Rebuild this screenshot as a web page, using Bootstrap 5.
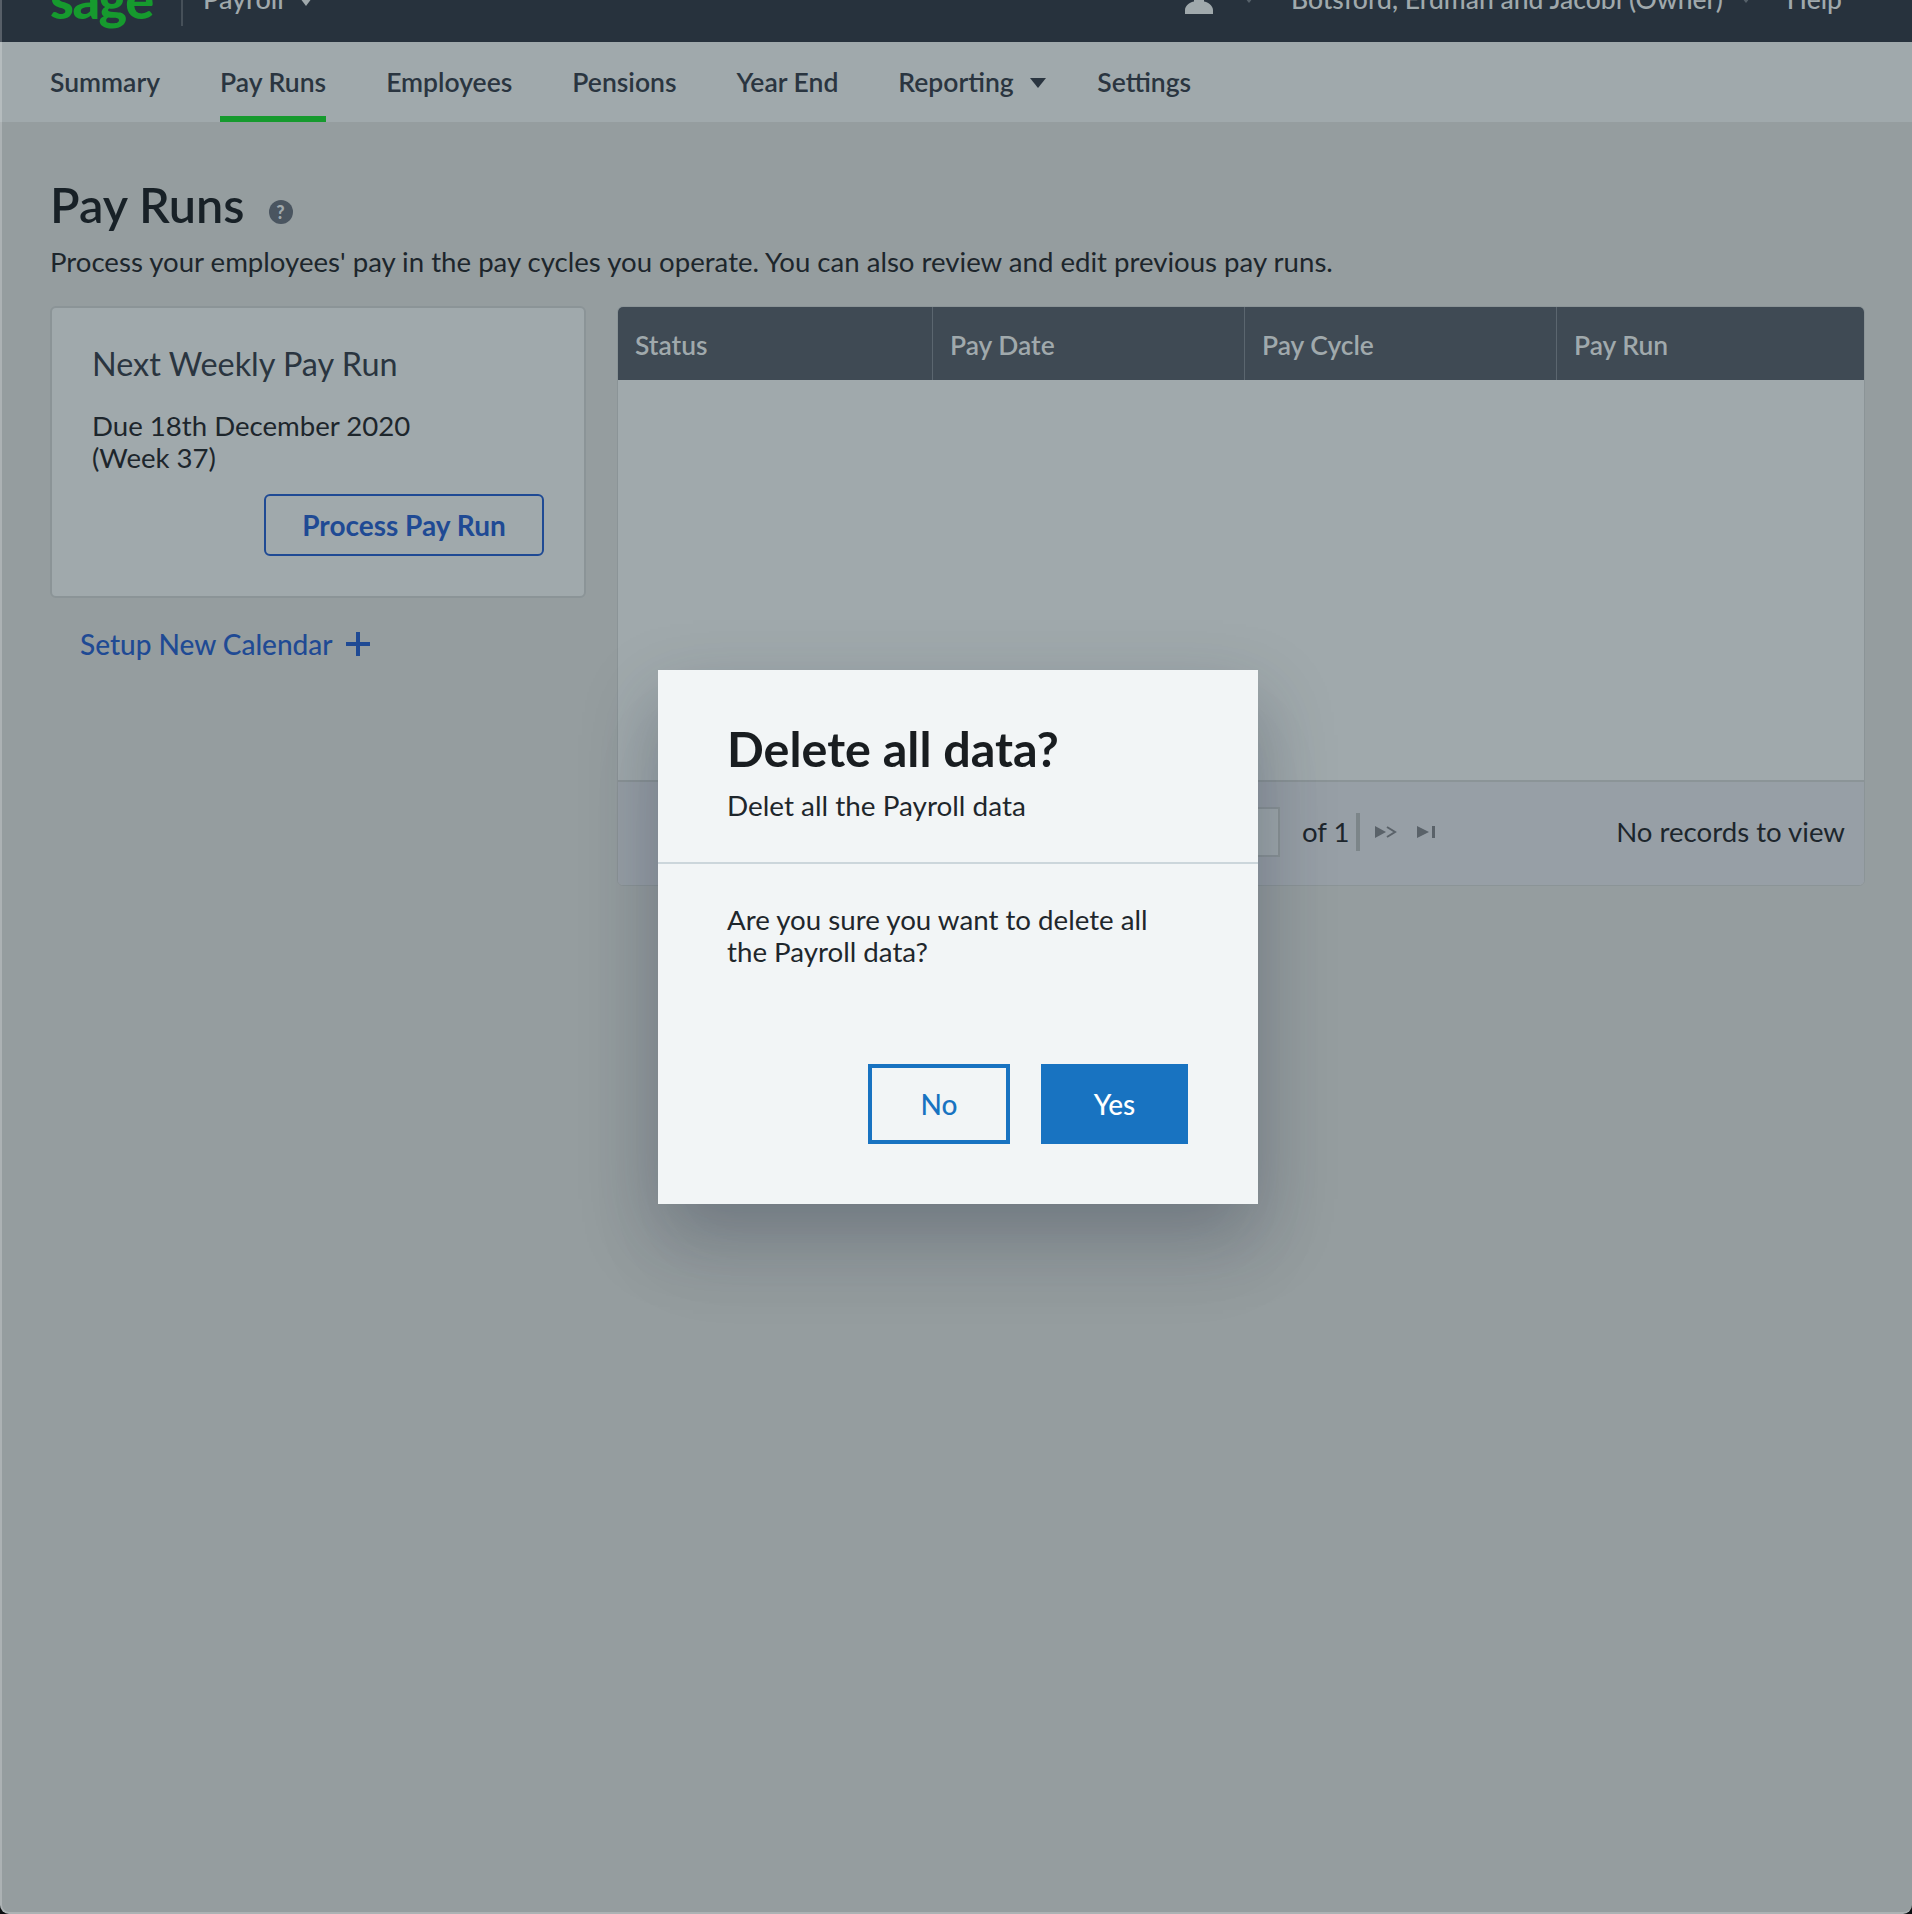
<!DOCTYPE html>
<html lang="en">
<head>
    <meta charset="UTF-8">
    <meta name="viewport" content="width=device-width, initial-scale=1.0">
    <title>Pay Runs</title>
    <link href="https://cdn.jsdelivr.net/npm/bootstrap@5.3.0/dist/css/bootstrap.min.css" rel="stylesheet">
    <style>
        html { background: #0c0f12; }
        body {
            font-family: Lato, "Liberation Sans", sans-serif;
            background: #959d9f;
            color: #1d262c;
            height: 1914px;
            font-size: 27.6px;
            line-height: 32px;
            position: relative;
            overflow: hidden;
            border-radius: 0 0 9px 9px;
        }
        /* light rim of the window, left and bottom */
        body::after {
            content: "";
            position: absolute;
            inset: 0;
            border-left: 2px solid rgba(255, 255, 255, .22);
            border-bottom: 2px solid rgba(255, 255, 255, .22);
            border-radius: 0 0 9px 9px;
            pointer-events: none;
        }
        .top-bar {
            height: 42px;
            background: #27323d;
            overflow: hidden;
            color: #a0a9ac;
            padding: 0 70px 0 50px;
        }
        .top-inner { height: 42px; margin-top: -21px; font-size: 26.5px; position: relative; }
        .top-text { margin-top: -3px; font-weight: 500; }
        .brand-word { color: #169a2e; font-weight: 900; font-size: 54px; line-height: 42px; width: 131px; margin-top: -2px; letter-spacing: -1.5px; }
        .top-sep { width: 2px; height: 47px; background: #465059; margin-right: 20px; align-self: flex-start; }
        .product-name { font-size: 27px; }
        .arrow-down { width: 0; height: 0; border-left: 6px solid transparent; border-right: 6px solid transparent; border-top: 8px solid #a0a9ac; }
        .arrow-faint { border-left-width: 4px; border-right-width: 4px; border-top: 5px solid #56616a; }
        .arrow-pay { margin-left: 16px; margin-top: 4px; }
        .avatar-mark { margin-left: auto; margin-right: 32px; }
        .arrow-user { margin-right: 38px; }
        .arrow-org { margin: 0 37px 0 19px; }
        .sub-nav { height: 80px; background: #a0a9ac; padding-left: 50px; gap: 60px; }
        .sub-nav a { color: #2a3540; font-size: 26.5px; font-weight: 600; text-decoration: none; height: 80px; line-height: 80px; display: block; }
        .sub-nav a.current { border-bottom: 6px solid #169a2e; }
        .sub-nav a.has-menu { margin-right: -9px; }
        .sub-nav .arrow-down { border-top-color: #2a3540; border-left-width: 8px; border-right-width: 8px; border-top-width: 10px; margin-left: 10px; display: inline-block; vertical-align: 4px; }
        .page-head { padding: 54px 50px 0; }
        .page-head h1 { font-size: 48.6px; line-height: 56px; font-weight: 600; margin: 0; color: #182127; }
        .help-dot { width: 24px; height: 24px; border-radius: 50%; background: #4a5560; color: #a0a9ac; font-size: 18px; line-height: 24px; font-weight: 900; text-align: center; margin: 16px 0 0 24px; }
        .page-head p { margin: 14px 0 0; }
        .content-row { padding: 28px 47px 0 50px; gap: 31px; align-items: flex-start; }
        .left-col { width: 536px; flex-shrink: 0; }
        .next-card { height: 292px; background: #a0a9ac; border: 2px solid #8b9497; border-radius: 6px; padding: 37px 40px 0; }
        .next-card h2 { font-size: 32.4px; line-height: 38px; font-weight: 400; color: #2a3540; margin: 0 0 27px; }
        .next-card p { margin: 0 0 20px; }
        .btn-process { display: block; margin-left: auto; width: 280px; height: 62px; border: 2px solid #1f4a94; border-radius: 6px; color: #1f4a94; background: transparent; font-size: 28px; font-weight: 700; padding: 0; }
        .setup-link { display: inline-flex; align-items: center; gap: 12px; color: #1f4a94; text-decoration: none; margin: 30px 0 0 30px; font-size: 28px; font-weight: 500; }
        .grid-panel { flex: 1; height: 580px; border: 1px solid #8b9497; border-radius: 6px; overflow: hidden; background: #a0a9ac; }
        .grid-head { height: 73px; background: #3f4a54; color: #a0a9ac; font-weight: 600; font-size: 26.4px; }
        .grid-head > div { padding: 22px 17px 0; border-right: 1px solid #5b666f; }
        .grid-head > div:nth-child(1) { width: 315px; }
        .grid-head > div:nth-child(2), .grid-head > div:nth-child(3) { width: 312px; }
        .grid-head > div:nth-child(4) { flex: 1; border-right: 0; }
        .grid-body { height: 400px; }
        .grid-foot { height: 105px; background: #979fa6; border-top: 2px solid #8b9497; padding: 0 19px 4px 562px; }
        .page-input { width: 100px; height: 50px; border: 2px solid #8b9497; background: #a0a9ac; }
        .page-count { margin-left: 22px; }
        .pager-sep { width: 4px; height: 38px; background: #7c8589; margin: 0 15px 0 6px; }
        .pager-icon { margin-right: 20px; }
        .dlg-wrap { position: absolute; top: 670px; left: 658px; width: 600px; }
        .dlg-box { border: 0; border-radius: 0; background: #f2f5f6; height: 534px; box-shadow: 0 30px 70px rgba(30, 40, 60, .28), 0 60px 80px rgba(30, 40, 60, .05); color: #1f272c; }
        .dlg-top { padding: 50px 70px 0 69px; height: 194px; border-bottom: 2px solid #ccd6db; font-size: 27.9px; }
        .dlg-top h3 { font-size: 48.5px; line-height: 56px; font-weight: 700; margin: 0 0 13px; color: #191d20; }
        .dlg-main { padding: 40px 80px 0 69px; font-size: 27.7px; }
        .dlg-btns { padding: 0 70px; margin-top: 96px; gap: 31px; }
        .btn-no, .btn-yes { height: 80px; border-radius: 0; font-size: 28px; font-weight: 500; padding: 0; }
        .btn-no { width: 142px; border: 4px solid #1873c1; color: #1873c1; background: transparent; }
        .btn-yes { width: 147px; border: 0; background: #1873c1; color: #fff; }
    </style>
</head>
<body>
    <div class="top-bar">
        <div class="top-inner d-flex align-items-center">
            <div class="brand-word">sage</div>
            <div class="top-sep"></div>
            <div class="top-text product-name">Payroll</div>
            <div class="arrow-down arrow-pay"></div>
            <svg class="avatar-mark" width="28" height="28" viewBox="0 0 28 28"><path d="M0 28V24C0 19 6 16 9 15.500L9 12H19L19 15.500C22 16 28 19 28 24V28Z" fill="#a0a9ac"/></svg>
            <div class="arrow-down arrow-faint arrow-user"></div>
            <div class="top-text">Botsford, Erdman and Jacobi (Owner)</div>
            <div class="arrow-down arrow-faint arrow-org"></div>
            <div class="top-text">Help</div>
        </div>
    </div>

    <nav class="sub-nav d-flex">
        <a href="#">Summary</a>
        <a href="#" class="current">Pay Runs</a>
        <a href="#">Employees</a>
        <a href="#">Pensions</a>
        <a href="#">Year End</a>
        <a href="#" class="has-menu">Reporting <span class="arrow-down"></span></a>
        <a href="#">Settings</a>
    </nav>

    <div class="page-head">
        <div class="d-flex align-items-center">
            <h1>Pay Runs</h1>
            <div class="help-dot">?</div>
        </div>
        <p>Process your employees' pay in the pay cycles you operate. You can also review and edit previous pay runs.</p>
    </div>

    <div class="content-row d-flex">
        <div class="left-col">
            <div class="next-card">
                <h2>Next Weekly Pay Run</h2>
                <p>Due 18th December 2020<br>(Week 37)</p>
                <button class="btn-process" type="button">Process Pay Run</button>
            </div>
            <a href="#" class="setup-link">Setup New Calendar
                <svg width="26" height="26" viewBox="0 0 26 26"><path d="M13 1V25M1 13H25" stroke="#1f4a94" stroke-width="4"/></svg>
            </a>
        </div>
        <div class="grid-panel">
            <div class="grid-head d-flex">
                <div>Status</div>
                <div>Pay Date</div>
                <div>Pay Cycle</div>
                <div>Pay Run</div>
            </div>
            <div class="grid-body"></div>
            <div class="grid-foot d-flex align-items-center">
                <div class="page-input"></div>
                <div class="page-count">of 1</div>
                <div class="pager-sep"></div>
                <svg class="pager-icon" width="22" height="12" viewBox="0 0 22 12"><path d="M0 0L11 6L0 12Z" fill="#5a6269"/><path d="M12 1L20 6L12 11" fill="none" stroke="#5a6269" stroke-width="2"/></svg>
                <svg class="pager-icon" width="18" height="12" viewBox="0 0 18 12"><path d="M0 0L12 6L0 12Z" fill="#5a6269"/><rect x="15" y="0" width="3" height="12" fill="#5a6269"/></svg>
                <div class="ms-auto">No records to view</div>
            </div>
        </div>
    </div>

    <div class="dlg-wrap">
        <div class="card dlg-box">
            <div class="dlg-top">
                <h3>Delete all data?</h3>
                <div>Delet all the Payroll data</div>
            </div>
            <div class="dlg-main">Are you sure you want to delete all the Payroll data?</div>
            <div class="dlg-btns d-flex justify-content-end">
                <button class="btn-no" type="button">No</button>
                <button class="btn-yes" type="button">Yes</button>
            </div>
        </div>
    </div>

    <script src="https://cdn.jsdelivr.net/npm/bootstrap@5.3.0/dist/js/bootstrap.bundle.min.js"></script>
</body>
</html>
